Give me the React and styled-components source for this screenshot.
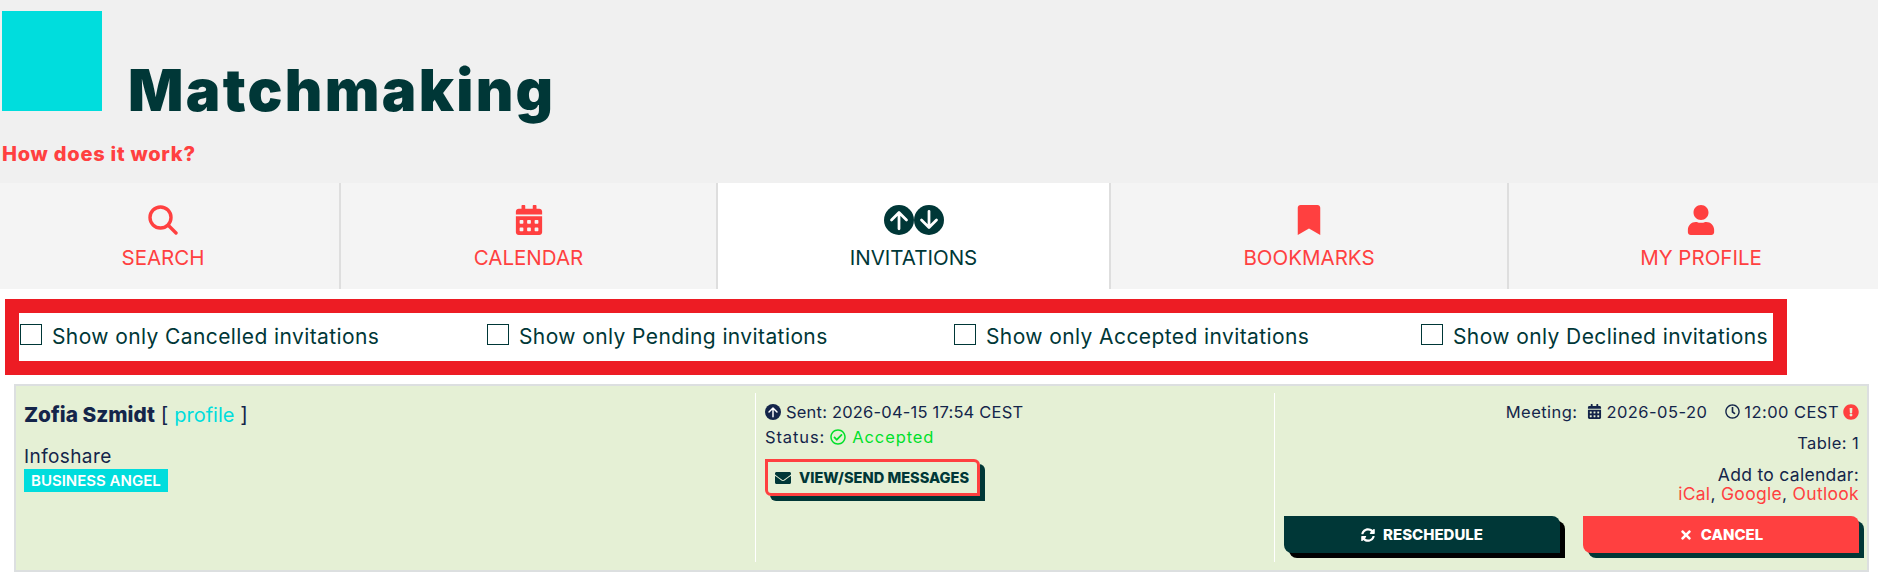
import React from "react";
import styled, { createGlobalStyle } from "styled-components";
import {
  FaBookmark,
  FaCalendarAlt,
  FaEnvelope,
  FaExclamationCircle,
  FaRegCheckCircle,
  FaRegClock,
  FaSyncAlt,
  FaTimes,
  FaUser,
} from "react-icons/fa";

const DARK = "#003737";
const NAVY = "#14254a";
const RED = "#ff4040";
const CYAN = "#00dddd";

const GlobalStyle = createGlobalStyle`
  html, body {
    margin: 0;
    padding: 0;
    background: #fff;
    overflow-x: hidden;
  }
  body {
    font-family: Inter, "Liberation Sans", sans-serif;
    color: ${NAVY};
  }
`;

const Page = styled.div`
  width: 1878px;
  height: 580px;
  overflow: hidden;
`;

const Header = styled.header`
  height: 183px;
  box-sizing: border-box;
  padding: 11px 0 0 2px;
  background: #f0f0f0;
`;

const TitleRow = styled.div`
  display: flex;
  align-items: flex-end;
  height: 100px;
`;

const Logo = styled.div`
  width: 100px;
  height: 100px;
  background: ${CYAN};
`;

const Title = styled.h1`
  margin: 0 0 0 26px;
  font-size: 58px;
  font-weight: 900;
  line-height: 42px;
  letter-spacing: 2.3px;
  color: ${DARK};
`;

const HowLink = styled.a`
  display: block;
  margin-top: 32px;
  font-size: 20px;
  font-weight: 800;
  line-height: 22px;
  letter-spacing: 0.75px;
  color: ${RED};
`;

const Tabs = styled.nav`
  display: grid;
  grid-template-columns: 354px 377px 393px 398px 384px;
  height: 106px;
  margin: 0 -15px 0 -13px;
`;

const Tab = styled.a`
  display: flex;
  flex-direction: column;
  align-items: center;
  box-sizing: border-box;
  padding-top: 22px;
  background: ${(p) => (p.$active ? "#fff" : "#f4f4f4")};
  border-right: ${(p) => (p.$last ? "none" : "2px solid #dedede")};
  color: ${(p) => (p.$active ? DARK : RED)};
  font-size: 20.5px;
  line-height: 22px;
`;

const TabIcon = styled.span`
  display: flex;
  align-items: center;
  justify-content: center;
  height: 30px;
  margin-bottom: 12px;
  font-size: 30px;
`;

const FilterBand = styled.div`
  display: grid;
  grid-template-columns: repeat(3, 467px) 1fr;
  box-sizing: border-box;
  width: 1782px;
  height: 76px;
  margin: 10px 0 0 5px;
  border: 14px solid #ed1c24;
  background: #fff;
`;

const Filter = styled.label`
  display: flex;
  align-items: center;
  padding: 0 0 2px 1px;
  color: ${DARK};
  font-size: 21px;
  letter-spacing: 0.4px;
  white-space: nowrap;
`;

const Box = styled.span`
  flex: none;
  box-sizing: border-box;
  width: 22px;
  height: 21px;
  margin: -3px 10px 0 0;
  border: 1px solid ${DARK};
  background: #fff;
`;

const Card = styled.section`
  display: grid;
  grid-template-columns: 731px 519px 1fr;
  box-sizing: border-box;
  width: 1855px;
  height: 188px;
  margin: 9px 0 0 14px;
  padding: 7px 10px 8px 8px;
  border: 2px solid #dcdfe0;
  background: #e5f0d5;
  font-size: 16.5px;
`;

const Person = styled.div`
  padding-top: 9px;
`;

const Name = styled.div`
  font-size: 20.8px;
  line-height: 26px;
`;

const Strong = styled.strong`
  font-weight: 800;
`;

const ProfileLink = styled.a`
  color: ${CYAN};
  font-size: 20px;
`;

const Company = styled.div`
  margin-top: 17px;
  font-size: 19px;
  line-height: 24px;
  letter-spacing: 0.4px;
`;

const Badge = styled.span`
  display: inline-block;
  padding: 0 7px;
  background: ${CYAN};
  color: #fff;
  font-size: 15px;
  font-weight: 600;
  line-height: 23px;
`;

const Details = styled.div`
  padding: 6px 0 0 9px;
  border-left: 1px solid #fff;
`;

const InfoLine = styled.div`
  display: flex;
  align-items: center;
  gap: 5px;
  height: 25px;
  letter-spacing: 0.2px;
`;

const StatusLabel = styled.span`
  letter-spacing: 0.9px;
`;

const Accepted = styled.span`
  display: inline-flex;
  align-items: center;
  gap: 6px;
  color: #00e02a;
  letter-spacing: 0.9px;
`;

const MessageButton = styled.a`
  display: inline-flex;
  align-items: center;
  gap: 8px;
  box-sizing: border-box;
  width: 215px;
  height: 37px;
  margin-top: 10px;
  padding-left: 7px;
  border: 3px solid ${RED};
  border-radius: 0 6px 0 6px;
  box-shadow: 5px 5px 0 ${DARK};
  color: ${DARK};
  font-size: 14.6px;
  font-weight: 800;
  white-space: nowrap;
`;

const Meeting = styled.div`
  display: flex;
  flex-direction: column;
  align-items: flex-end;
  padding: 6px 0 0 9px;
  border-left: 1px solid #fff;
`;

const MeetingLine = styled.div`
  display: flex;
  align-items: center;
  gap: 4px;
  height: 25px;
  letter-spacing: 0.45px;
`;

const Spaced = styled.span`
  display: flex;
  margin-left: ${(p) => p.$left}px;
`;

const AlertIcon = styled.span`
  display: flex;
  color: ${RED};
  font-size: 16px;
`;

const TableLine = styled.div`
  margin-top: 7px;
  line-height: 25px;
  letter-spacing: 0.4px;
`;

const CalendarLinks = styled.div`
  margin-top: 9px;
  text-align: right;
  font-size: 17.5px;
  line-height: 19px;
  letter-spacing: 0.3px;
`;

const RedLink = styled.a`
  color: ${RED};
`;

const Actions = styled.div`
  display: grid;
  grid-template-columns: 276px 276px;
  gap: 23px;
  align-self: stretch;
  margin-top: 13px;
`;

const ActionButton = styled.a`
  display: flex;
  align-items: center;
  justify-content: center;
  gap: 8px;
  height: 37px;
  border-radius: 0 8px 0 8px;
  background: ${(p) => p.$bg};
  box-shadow: 5px 5px 0 ${(p) => p.$shadow};
  color: #fff;
  font-size: 15px;
  font-weight: 800;
`;

function ArrowCircle({ dir, size, color }) {
  const d = dir === "up" ? "M12 19V6M6 12l6-6 6 6" : "M12 5v13M6 12l6 6 6-6";
  return (
    <svg width={size} height={size} viewBox="0 0 24 24">
      <circle cx="12" cy="12" r="12" fill={color} />
      <path d={d} fill="none" stroke="#fff" strokeWidth="2.2" strokeLinecap="round" strokeLinejoin="round" />
    </svg>
  );
}

function SearchIcon() {
  return (
    <svg width="30" height="30" viewBox="0 0 30 30" fill="none" stroke={RED} strokeWidth="3.4" strokeLinecap="round">
      <circle cx="12.5" cy="12.5" r="10.5" />
      <path d="M20.5 20.5l7.5 7.5" />
    </svg>
  );
}

const filters = ["Cancelled", "Pending", "Accepted", "Declined"];

export default function App() {
  return (
    <Page>
      <GlobalStyle />
      <Header>
        <TitleRow>
          <Logo />
          <Title>Matchmaking</Title>
        </TitleRow>
        <HowLink>How does it work?</HowLink>
      </Header>
      <Tabs>
        <Tab>
          <TabIcon><SearchIcon /></TabIcon>
          SEARCH
        </Tab>
        <Tab>
          <TabIcon><FaCalendarAlt /></TabIcon>
          CALENDAR
        </Tab>
        <Tab $active>
          <TabIcon>
            <ArrowCircle dir="up" size={30} color={DARK} />
            <ArrowCircle dir="down" size={30} color={DARK} />
          </TabIcon>
          INVITATIONS
        </Tab>
        <Tab>
          <TabIcon><FaBookmark /></TabIcon>
          BOOKMARKS
        </Tab>
        <Tab $last>
          <TabIcon><FaUser /></TabIcon>
          MY PROFILE
        </Tab>
      </Tabs>
      <FilterBand>
        {filters.map((f) => (
          <Filter key={f}>
            <Box />
            Show only {f} invitations
          </Filter>
        ))}
      </FilterBand>
      <Card>
        <Person>
          <Name>
            <Strong>Zofia Szmidt</Strong> [ <ProfileLink>profile</ProfileLink> ]
          </Name>
          <Company>Infoshare</Company>
          <Badge>BUSINESS ANGEL</Badge>
        </Person>
        <Details>
          <InfoLine>
            <ArrowCircle dir="up" size={16} color={NAVY} />
            Sent: 2026-04-15 17:54 CEST
          </InfoLine>
          <InfoLine>
            <StatusLabel>Status:</StatusLabel>
            <Accepted>
              <FaRegCheckCircle size={16} />
              Accepted
            </Accepted>
          </InfoLine>
          <MessageButton>
            <FaEnvelope size={16} />
            VIEW/SEND MESSAGES
          </MessageButton>
        </Details>
        <Meeting>
          <MeetingLine>
            Meeting:
            <Spaced $left={6}><FaCalendarAlt size={15} /></Spaced>
            2026-05-20
            <Spaced $left={14}><FaRegClock size={15} /></Spaced>
            12:00 CEST
            <AlertIcon><FaExclamationCircle /></AlertIcon>
          </MeetingLine>
          <TableLine>Table: 1</TableLine>
          <CalendarLinks>
            Add to calendar:
            <br />
            <RedLink>iCal</RedLink>, <RedLink>Google</RedLink>, <RedLink>Outlook</RedLink>
          </CalendarLinks>
          <Actions>
            <ActionButton $bg={DARK} $shadow="#000">
              <FaSyncAlt size={14} />
              RESCHEDULE
            </ActionButton>
            <ActionButton $bg={RED} $shadow={DARK}>
              <FaTimes size={14} />
              CANCEL
            </ActionButton>
          </Actions>
        </Meeting>
      </Card>
    </Page>
  );
}
